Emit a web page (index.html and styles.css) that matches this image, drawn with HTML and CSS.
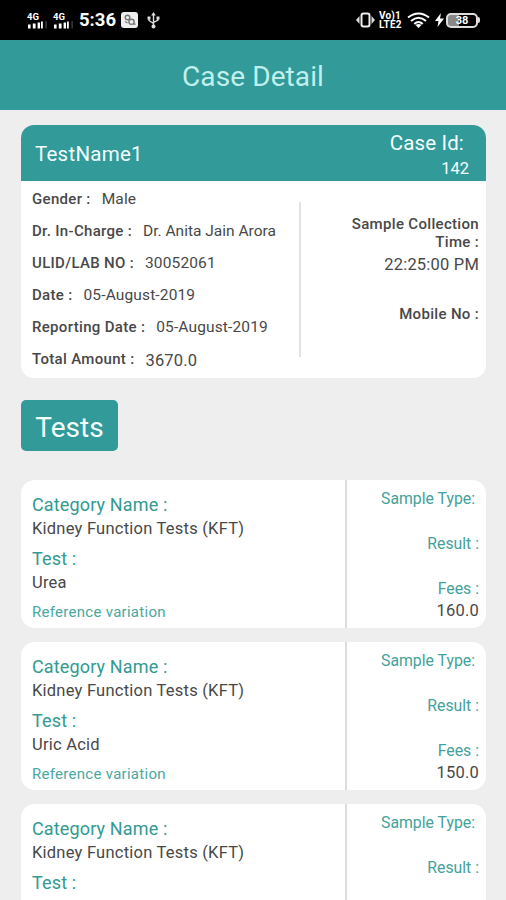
FILE: index.html
```html
<!DOCTYPE html>
<html lang="en">
<head>
<meta charset="utf-8">
<title>Case Detail</title>
<link rel="stylesheet" href="styles.css">
</head>
<body>
<div class="status">
  <div class="status-left">
    <div class="signal"><span class="net">4G</span><svg width="20" height="8" viewBox="0 0 20 8"><path fill="#fff" d="M1 3.500h2.600v4H1zM5.800 2.500h2.800v5H5.800zM10.600 1.500h2.400v6h-2.400zM14 .5h1.800v7H14z"/><path fill="#333" d="M18.300 0h1.700v7.500h-1.700z"/></svg></div>
    <div class="signal"><span class="net">4G</span><svg width="20" height="8" viewBox="0 0 20 8"><path fill="#fff" d="M1 3.500h2.600v4H1zM5.800 2.500h2.800v5H5.800zM10.600 1.500h2.400v6h-2.400zM14 .5h1.800v7H14z"/><path fill="#333" d="M18.300 0h1.700v7.500h-1.700z"/></svg></div>
    <span class="clock">5:36</span>
    <svg class="app" width="17" height="16" viewBox="0 0 17 16"><rect width="17" height="16" rx="3" fill="#eee"/><g fill="none" stroke="#777" stroke-width="1.400"><circle cx="6.500" cy="5.500" r="2.300"/><circle cx="10.500" cy="9.800" r="2.600"/><path d="M4 9.500l2.500 1.500M12.500 12l2 .3"/></g></svg>
    <svg class="usb" width="13" height="17" viewBox="0 0 13 17"><g fill="none" stroke="#ddd" stroke-width="1.400"><path d="M6.500 3v11M2 6v2.500l4.500 3M11 6v2L6.500 10.500"/></g><path fill="#ddd" d="M6.500 0l2.300 3.500H4.200zM.5 4.500h3v3h-3zM9.500 4.500h3v3h-3z"/><circle cx="6.500" cy="14.500" r="2" fill="#ddd"/></svg>
  </div>
  <div class="status-right">
    <svg width="19" height="16" viewBox="0 0 19 16"><rect x="5.500" y="1.500" width="8" height="13" rx="2" fill="none" stroke="#eee" stroke-width="2"/><path fill="#ddd" d="M3.500 4v8L0 8zM15.500 4v8L19 8z"/></svg>
    <div class="volte"><span>Vo)1</span><span>LTE2</span></div>
    <svg class="wifi" width="23" height="17" viewBox="0 0 23 17"><g fill="none" stroke="#fff" stroke-width="2"><path d="M1 5.500Q11.500-2.500 22 5.500M4 9Q11.500 2.500 19 9M7.300 12Q11.500 8 15.700 12"/></g><path fill="#fff" d="M8.500 13Q11.500 11 14.500 13L11.500 16z"/></svg>
    <svg class="bolt" width="9" height="14" viewBox="0 0 9 14"><path fill="#fff" d="M6 0L0 8h3.500L2.500 14 9 5.500H5z"/></svg>
    <div class="battery"><span>38</span></div><i class="battery-tip"></i>
  </div>
</div>
<header class="appbar">Case Detail</header>
<main>
  <section class="case">
    <div class="case-head">
      <div class="name">TestName1</div>
      <div class="caseid"><div class="caseid-label">Case Id:</div><div class="caseid-value">142</div></div>
    </div>
    <div class="case-body">
      <div class="info">
        <div class="row"><b>Gender :</b><span>Male</span></div>
        <div class="row"><b>Dr. In-Charge :</b><span class="doctor">Dr. Anita Jain Arora</span></div>
        <div class="row"><b>ULID/LAB NO :</b><span>30052061</span></div>
        <div class="row"><b>Date :</b><span>05-August-2019</span></div>
        <div class="row"><b>Reporting Date :</b><span>05-August-2019</span></div>
        <div class="row"><b>Total Amount :</b><span class="amount">3670.0</span></div>
      </div>
      <div class="rule"></div>
      <div class="side">
        <b>Sample Collection<br>Time :</b>
        <span class="time">22:25:00 PM</span>
        <b class="mobile">Mobile No :</b>
      </div>
    </div>
  </section>
  <h2 class="tests">Tests</h2>
  <article class="test">
    <div class="test-main">
      <div class="label">Category Name :</div><div class="value">Kidney Function Tests (KFT)</div>
      <div class="label">Test :</div><div class="value">Urea</div>
      <div class="ref">Reference variation</div>
    </div>
    <div class="test-side"><div class="type">Sample Type:</div><div class="result">Result :</div><div class="fees">Fees :</div><div class="fee">160.0</div></div>
  </article>
  <article class="test">
    <div class="test-main">
      <div class="label">Category Name :</div><div class="value">Kidney Function Tests (KFT)</div>
      <div class="label">Test :</div><div class="value">Uric Acid</div>
      <div class="ref">Reference variation</div>
    </div>
    <div class="test-side"><div class="type">Sample Type:</div><div class="result">Result :</div><div class="fees">Fees :</div><div class="fee">150.0</div></div>
  </article>
  <article class="test">
    <div class="test-main">
      <div class="label">Category Name :</div><div class="value">Kidney Function Tests (KFT)</div>
      <div class="label">Test :</div>
    </div>
    <div class="test-side"><div class="type">Sample Type:</div><div class="result">Result :</div></div>
  </article>
</main>
</body>
</html>
```
FILE: styles.css
```css
* { box-sizing: border-box; }
body {
  margin: 0;
  height: 900px;
  overflow: hidden;
  background: #eee;
  font-family: Roboto, "Liberation Sans", sans-serif;
  color: #484848;
}
svg { display: block; flex: none; }
.status {
  height: 40px;
  background: #000;
  color: #fff;
  display: flex;
  justify-content: space-between;
  padding: 0 26px 0 27px;
}
.status-left, .status-right { display: flex; align-items: center; }
.signal { width: 26px; padding-top: 1px; }
.net { display: block; font-size: 9.5px; line-height: 9px; font-weight: 700; }
.clock { font-size: 18.5px; font-weight: 700; line-height: 42px; width: 37px; white-space: nowrap; }
.app { margin-left: 5px; }
.usb { margin-left: 9px; }
.volte { margin-left: 4px; width: 27px; font-size: 10px; line-height: 9px; font-weight: 700; letter-spacing: .2px; }
.volte span { display: block; white-space: nowrap; }
.wifi { margin-left: 1px; }
.bolt { margin-left: 5px; }
.battery {
  margin-left: 2px;
  width: 32px;
  height: 15px;
  border: 2px solid #ddd;
  border-radius: 5px;
  background: linear-gradient(90deg, #888 38%, #000 38%);
  font-size: 11px;
  line-height: 11px;
  font-weight: 700;
  text-align: center;
}
.battery-tip { width: 2px; height: 6px; background: #ddd; border-radius: 0 2px 2px 0; }
.appbar {
  height: 70px;
  background: #329a98;
  color: #c0efed;
  font-size: 28px;
  line-height: 73px;
  text-align: center;
  letter-spacing: .1px;
}
main { padding: 15px 20px 0 21px; }
.case { height: 253px; background: #fff; border-radius: 13px; overflow: hidden; }
.case-head {
  height: 56px;
  background: #329a98;
  color: #f4ffff;
  display: flex;
  justify-content: space-between;
  padding: 0 17px 0 14px;
}
.name { font-size: 20.5px; line-height: 58px; letter-spacing: .25px; }
.caseid { text-align: right; }
.caseid-label { font-size: 20.5px; line-height: 36px; padding-right: 5px; letter-spacing: .15px; }
.caseid-value { font-size: 16.5px; line-height: 16px; }
.case-body { display: flex; height: 197px; }
.info { width: 278px; padding: 2px 0 0 11px; }
.row { height: 32px; display: flex; align-items: center; gap: 11px; font-size: 15.5px; letter-spacing: .14px; white-space: nowrap; }
.doctor { letter-spacing: 0; }
b { font-weight: 500; font-size: 15px; letter-spacing: .32px; }
.amount { font-size: 16.5px; padding-top: 2px; }
.rule { width: 2px; height: 155px; margin-top: 21px; background: #e2e2e2; }
.side { flex: 1; padding: 34px 7px 0 0; text-align: right; line-height: 18px; display: flex; flex-direction: column; white-space: nowrap; }
.time { font-size: 16.5px; line-height: 27px; letter-spacing: .2px; }
.mobile { margin-top: 27px; }
.tests {
  margin: 21.5px 0 29px;
  width: 97px;
  height: 51.5px;
  border-radius: 5px;
  background: #329a98;
  color: #f4ffff;
  font-weight: 400;
  font-size: 28px;
  line-height: 55px;
  text-align: center;
}
.test { display: flex; height: 148px; margin-bottom: 14px; background: #fff; border-radius: 14px; overflow: hidden; }
.test-main { width: 326px; border-right: 2px solid #ddd; padding: 12px 0 0 11px; }
.label { font-size: 18px; line-height: 26px; height: 25px; color: #329a90; letter-spacing: .14px; }
.value { font-size: 16.5px; line-height: 24px; height: 29px; letter-spacing: .23px; }
.ref { font-size: 15px; line-height: 20px; margin-top: 2px; color: #4ba79f; letter-spacing: .28px; }
.test-side { flex: 1; padding: 9px 7px 0 0; text-align: right; font-size: 15.8px; line-height: 20px; color: #43a29a; }
.type { padding-right: 4px; }
.result, .fees { margin-top: 25px; }
.fee { margin-top: 2px; color: #484848; font-size: 16.5px; letter-spacing: .2px; }
```
